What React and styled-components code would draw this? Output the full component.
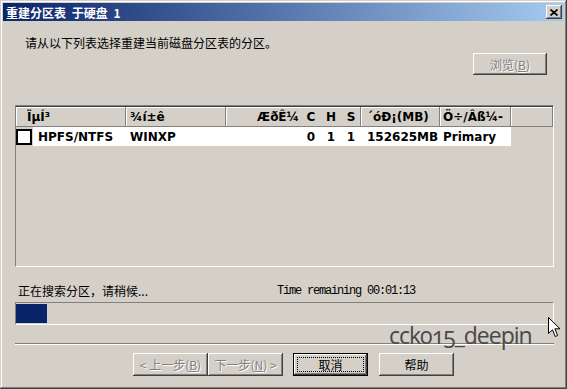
import React from "react";
import styled, { createGlobalStyle } from "styled-components";

const FACE = "#D4D0C8";
const CJK = `"Noto Sans CJK SC", "Liberation Sans", sans-serif`;
const LIST = `"DejaVu Sans", "Liberation Sans", sans-serif`;
const COLS = "110px 100px 135px 79px 71px 1fr";

const GlobalStyle = createGlobalStyle`
  html, body { margin: 0; padding: 0; background: ${FACE}; }
  body { font-family: ${CJK}; font-size: 12px; }
  * { box-sizing: border-box; }
`;

const Window = styled.div`
  position: relative;
  width: 567px;
  height: 389px;
  padding: 3px;
  display: flex;
  flex-direction: column;
  background: ${FACE};
  box-shadow: inset -1px -1px #404040, inset 1px 1px ${FACE},
    inset -2px -2px #808080, inset 2px 2px #fff;
  overflow: hidden;
`;

const TitleBar = styled.div`
  height: 18px;
  display: flex;
  align-items: center;
  justify-content: space-between;
  padding: 0 2px 0 3px;
  background: linear-gradient(to right, #0a246a, #a6caf0);
  color: #fff;
  font: bold 12px ${CJK};
  word-spacing: 3px;
`;

const CloseButton = styled.div`
  width: 16px;
  height: 14px;
  display: flex;
  align-items: center;
  justify-content: center;
  background: ${FACE};
  box-shadow: inset -1px -1px #404040, inset 1px 1px #fff,
    inset -2px -2px #808080;
`;

const Body = styled.div`
  flex: 1;
  display: flex;
  flex-direction: column;
  padding: 0 10px 0 12px;
`;

const Prompt = styled.div`
  margin-top: 15px;
  padding-left: 10px;
  line-height: 14px;
  color: #000;
`;

const Button = styled.button`
  position: relative;
  width: ${(p) => p.$w || 75}px;
  height: ${(p) => p.$h || 23}px;
  margin: 0;
  padding: 0;
  border: ${(p) => (p.$default ? "1px solid #000" : "none")};
  background: ${FACE};
  box-shadow: inset -1px -1px #404040, inset 1px 1px #fff,
    inset -2px -2px #808080;
  font: 12px ${CJK};
  color: ${(p) => (p.disabled ? "#808080" : "#000")};
  text-shadow: ${(p) => (p.disabled ? "1px 1px #fff" : "none")};
  white-space: nowrap;

  &::after {
    content: "";
    display: ${(p) => (p.$default ? "block" : "none")};
    position: absolute;
    inset: 3px;
    border: 1px dotted #000;
  }
`;

const BrowseButton = styled(Button)`
  align-self: flex-end;
  margin-top: 3px;
  margin-right: 7px;
`;

const ListView = styled.div`
  margin-top: 30px;
  height: 162px;
  padding-top: 1px;
  border: 1px solid;
  border-color: #808080 #fff #fff #808080;
  box-shadow: inset 0 1px #404040;
  font: bold 12px ${LIST};
  color: #000;
`;

const HeaderRow = styled.div`
  display: grid;
  grid-template-columns: ${COLS};
  height: 20px;
`;

const HeadCell = styled.div`
  display: flex;
  align-items: center;
  justify-content: ${(p) => (p.$end ? "flex-end" : "flex-start")};
  padding-left: ${(p) => p.$pad || 0}px;
  box-shadow: inset -1px -1px #808080, inset 1px 1px #fff;
  white-space: nowrap;
  overflow: hidden;
`;

const DataRow = styled.div`
  display: grid;
  grid-template-columns: ${COLS};
  height: 19px;
`;

const Cell = styled.div`
  display: flex;
  align-items: center;
  justify-content: ${(p) => (p.$end ? "flex-end" : "flex-start")};
  padding-left: ${(p) => p.$pad || 0}px;
  background: ${(p) => (p.$blank ? "transparent" : "#fff")};
  white-space: nowrap;
  overflow: hidden;
`;

const CheckCell = styled.div`
  display: flex;
  align-items: center;
`;

const CheckBox = styled.span`
  width: 16px;
  height: 16px;
  margin-right: 1px;
  border: 2px solid #000;
  background: #fff;
  flex: none;
`;

const Label = styled.span`
  flex: 1;
  align-self: stretch;
  display: flex;
  align-items: center;
  padding-left: 5px;
  background: #fff;
`;

const Geo = styled.span`
  width: 20px;
  text-align: center;
  flex: none;
`;

const GeoLabel = styled.span`
  margin-right: 2px;
`;

const StatusRow = styled.div`
  margin-top: 17px;
  display: grid;
  grid-template-columns: 262px auto;
  line-height: 14px;
  color: #000;
`;

const StatusText = styled.span`
  padding-left: 3px;
`;

const TimeText = styled.span`
  font: 12px "Liberation Mono", monospace;
  letter-spacing: -1.2px;
`;

const Progress = styled.div`
  margin-top: 4px;
  height: 23px;
  padding: 1px 1px 1px 0;
  border: 1px solid;
  border-color: #808080 #fff #fff #808080;
`;

const ProgressFill = styled.div`
  height: 100%;
  background: #0a246a;
`;

const Separator = styled.div`
  margin-top: 18px;
  height: 2px;
  border-top: 1px solid #808080;
  border-bottom: 1px solid #fff;
`;

const ButtonRow = styled.div`
  margin-top: 8px;
  display: flex;
  padding-left: 118px;
`;

const Gap = styled.span`
  width: ${(p) => p.$w}px;
  flex: none;
`;

const Watermark = styled.div`
  position: absolute;
  left: 389px;
  top: 324px;
  font: 23px "Open Sans", "Noto Sans", sans-serif;
  font-variant-numeric: oldstyle-nums;
  letter-spacing: -1px;
  line-height: 23px;
  color: #484848;
  pointer-events: none;
`;

const Cursor = styled.svg`
  position: absolute;
  left: 548px;
  top: 317px;
`;

const COLUMNS = [
  { title: "ÏµÍ³", pad: 11 },
  { title: "¾í±ê", pad: 4 },
];

const partition = {
  fs: "HPFS/NTFS",
  label: "WINXP",
  c: 0,
  h: 1,
  s: 1,
  size: "152625MB",
  kind: "Primary",
};

export default function App() {
  return (
    <>
      <GlobalStyle />
      <Window>
        <TitleBar>
          <span>重建分区表 于硬盘 1</span>
          <CloseButton>
            <svg width="8" height="7" viewBox="0 0 8 7">
              <path d="M0.5 0.5 L7.5 6.5 M7.5 0.5 L0.5 6.5" stroke="#000" strokeWidth="1.7" fill="none" />
            </svg>
          </CloseButton>
        </TitleBar>

        <Body>
          <Prompt>请从以下列表选择重建当前磁盘分区表的分区。</Prompt>
          <BrowseButton $w={74} $h={22} disabled>
            浏览(<u>B</u>)
          </BrowseButton>

          <ListView>
            <HeaderRow>
              {COLUMNS.map((c) => (
                <HeadCell key={c.title} $pad={c.pad}>
                  {c.title}
                </HeadCell>
              ))}
              <HeadCell $end>
                <GeoLabel>ÆðÊ¼</GeoLabel>
                <Geo>C</Geo>
                <Geo>H</Geo>
                <Geo>S</Geo>
              </HeadCell>
              <HeadCell $pad={6}>´óÐ¡(MB)</HeadCell>
              <HeadCell $pad={3}>Ö÷/Âß¼-</HeadCell>
              <HeadCell />
            </HeaderRow>
            <DataRow>
              <CheckCell>
                <CheckBox />
                <Label>{partition.fs}</Label>
              </CheckCell>
              <Cell $pad={4}>{partition.label}</Cell>
              <Cell $end>
                <Geo>{partition.c}</Geo>
                <Geo>{partition.h}</Geo>
                <Geo>{partition.s}</Geo>
              </Cell>
              <Cell $pad={6}>{partition.size}</Cell>
              <Cell $pad={3}>{partition.kind}</Cell>
              <Cell $blank />
            </DataRow>
          </ListView>

          <StatusRow>
            <StatusText>正在搜索分区，请稍候...</StatusText>
            <TimeText>Time remaining 00:01:13</TimeText>
          </StatusRow>
          <Progress>
            <ProgressFill style={{ width: 31 }} />
          </Progress>

          <Separator />

          <ButtonRow>
            <Button disabled>
              &lt; 上一步(<u>B</u>)
            </Button>
            <Button disabled>
              下一步(<u>N</u>) &gt;
            </Button>
            <Gap $w={10} />
            <Button $default>取消</Button>
            <Gap $w={11} />
            <Button>帮助</Button>
          </ButtonRow>
        </Body>

        <Watermark>cck015_deepin</Watermark>
        <Cursor width="13" height="21" viewBox="0 0 13 21">
          <path
            d="M0.5 0.5 L0.5 16.5 L4.5 12.8 L7.2 19.5 L9.6 18.5 L6.9 11.8 L12 11.8 Z"
            fill="#fff"
            stroke="#000"
            strokeWidth="1"
          />
        </Cursor>
      </Window>
    </>
  );
}
